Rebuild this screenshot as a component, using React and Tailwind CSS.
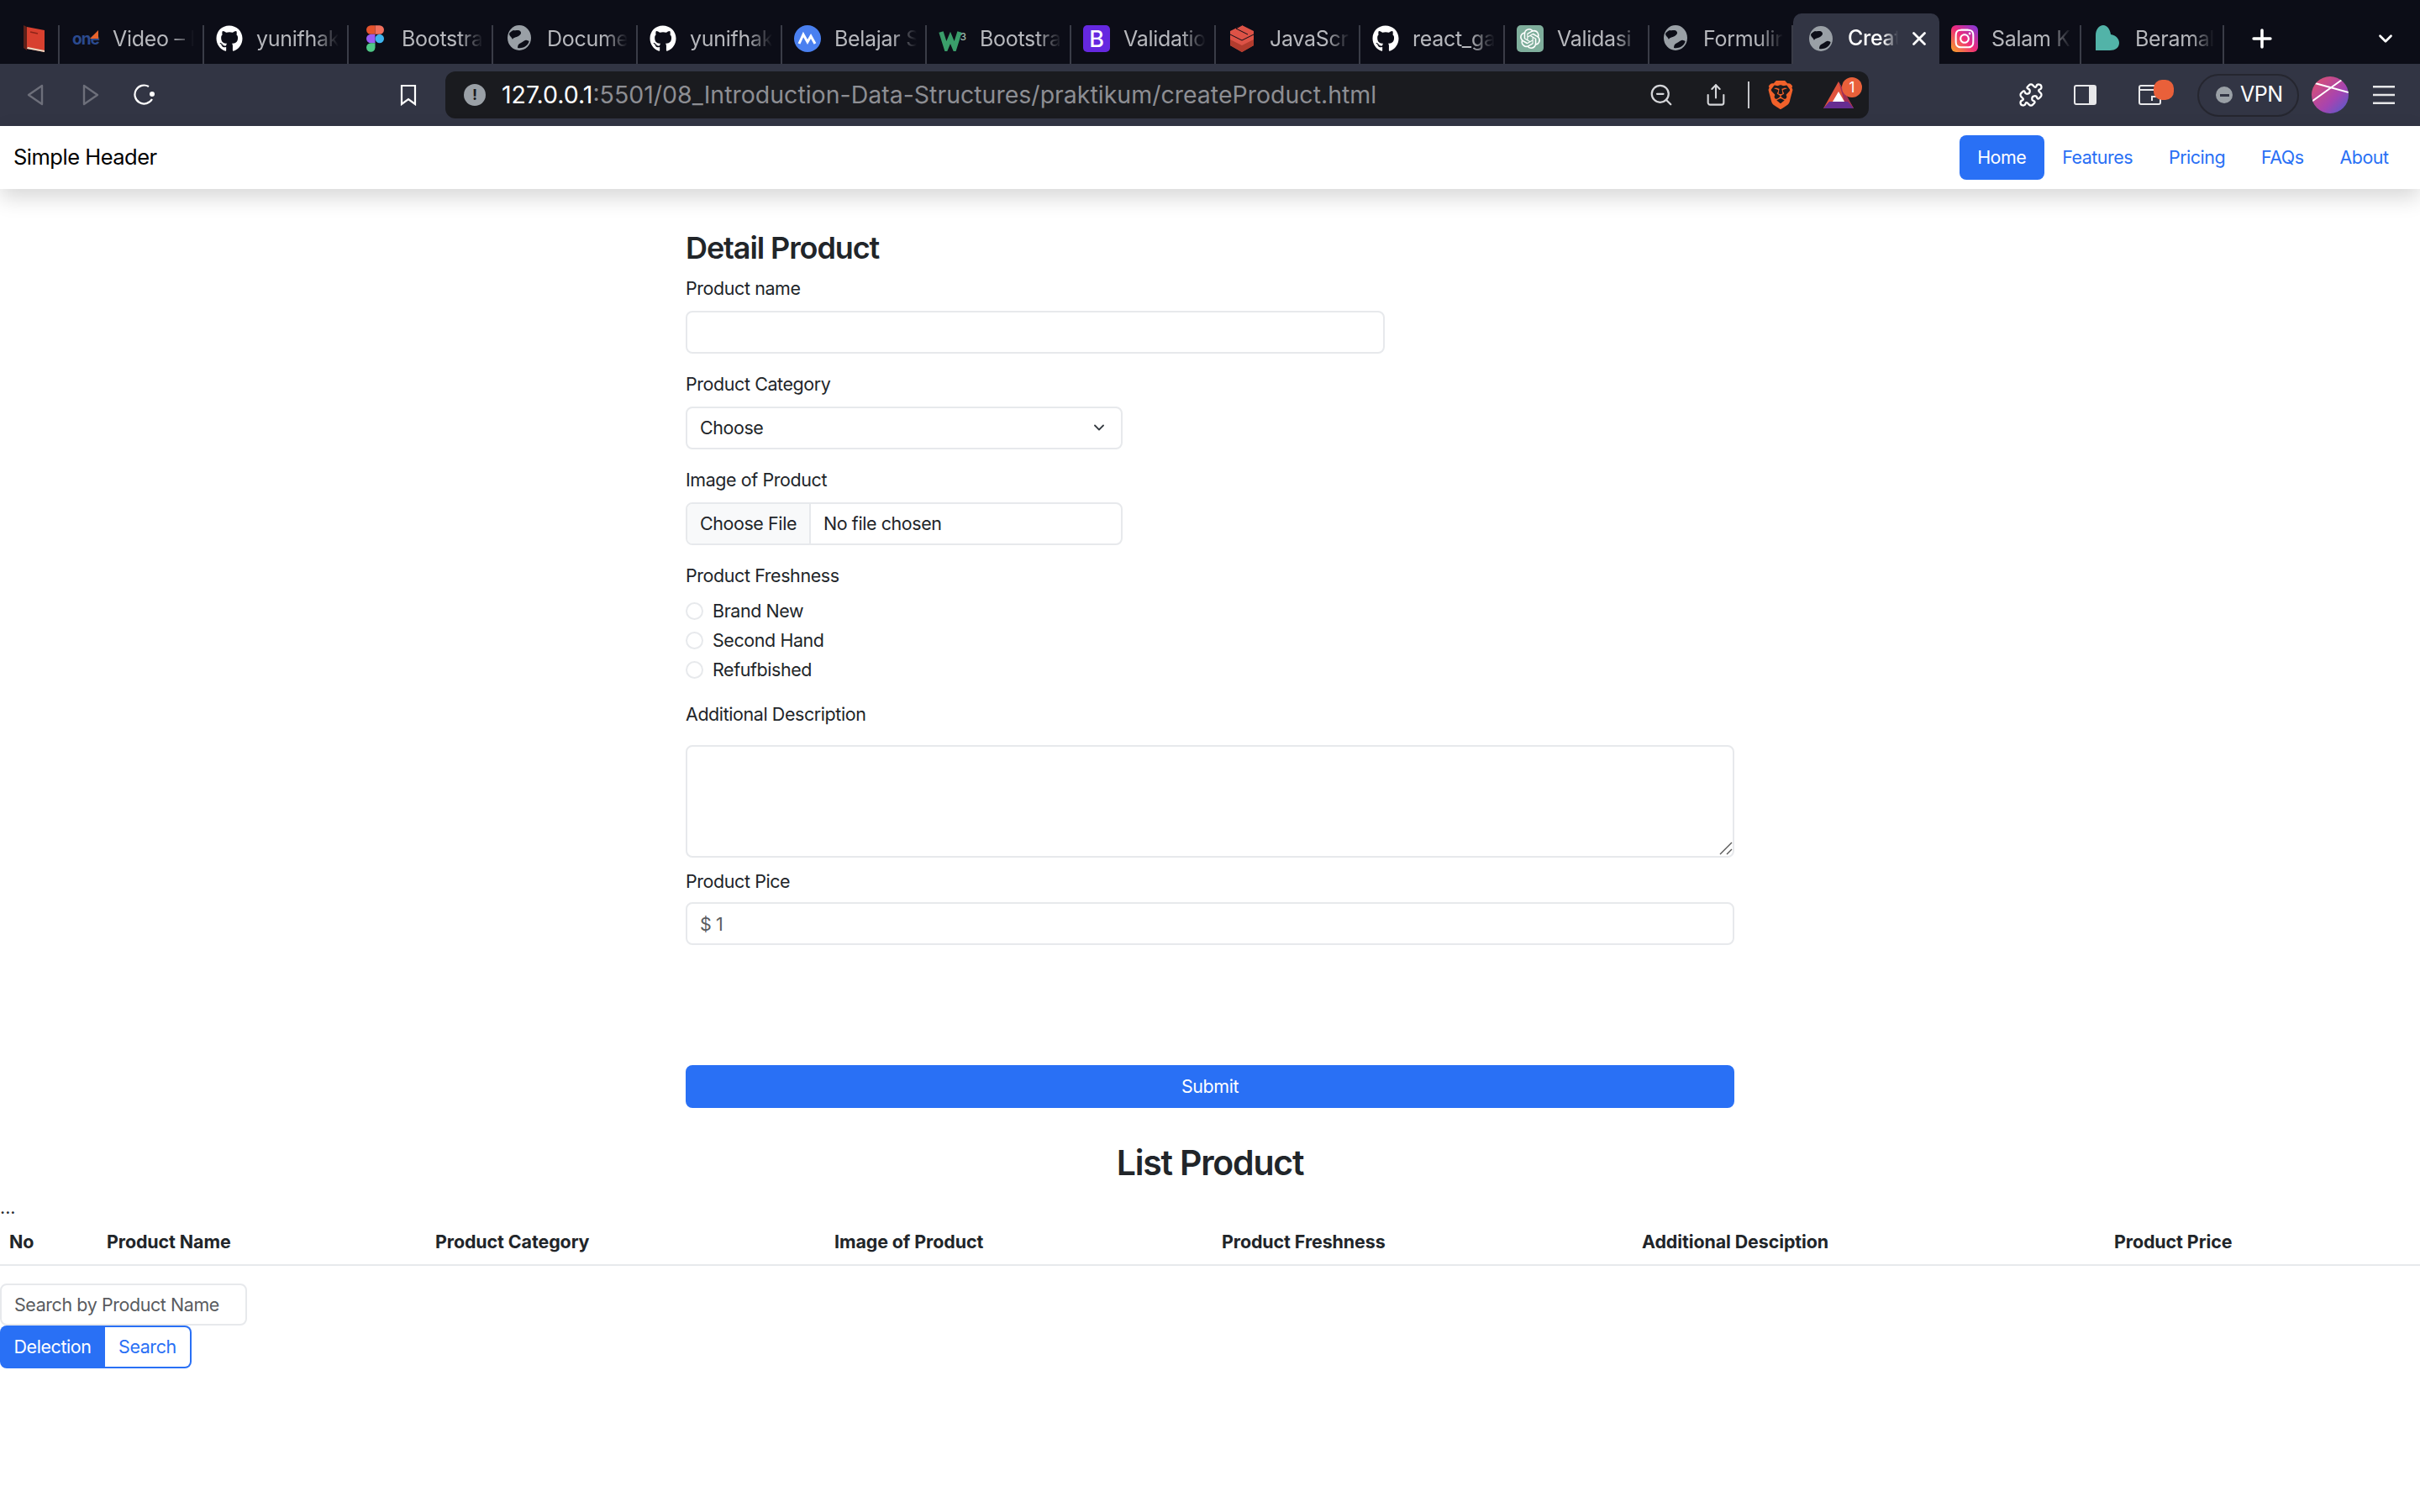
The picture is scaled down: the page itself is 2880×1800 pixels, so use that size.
import React from "react";
import { ChevronDown, Plus, X, Puzzle, ZoomOut, Share } from "lucide-react";
import { FaGithub, FaInstagram } from "react-icons/fa";
import { SiBrave, SiOpenai } from "react-icons/si";

const Globe = () => (
  <svg viewBox="0 0 28 30" className="w-[28px] h-[30px]">
    <ellipse cx="14" cy="15" rx="14" ry="15" fill="#9aa0a6" />
    <path d="M7 6c3 1 6-1 8 1s1 4-2 6-6 1-7 4c-1-3-4-4-4-7 1-2 3-3 5-4zM12 27c0-3 1-5 4-6s4-4 7-3 3 1 2 3c-2 4-7 7-13 6z" fill="#0c0d17" />
  </svg>
);

const Github = () => <FaGithub className="w-[32px] h-[32px] text-white" />;

const BookIcon = () => (
  <svg viewBox="0 0 26 32" className="w-[26px] h-[32px]">
    <path d="M1 0l4 2v28l-4-3z" fill="#5e2019" />
    <path d="M5 2l21 4v26L5 28z" fill="#d8402f" />
    <path d="M5 28l21 4v-2L6 26z" fill="#e8d9c4" />
    <path d="M9 8l9 2" stroke="#8e2418" strokeWidth="1.5" />
  </svg>
);

const OneIcon = () => (
  <div className="w-[30px] h-[32px] relative flex items-center justify-center">
    <span className="text-[19px] font-bold text-[#2b4a8f] tracking-tighter leading-none">one</span>
    <span className="absolute right-0 top-[6px] w-0 h-0 border-l-[10px] border-b-[10px] border-l-transparent border-b-[#e8642c]" />
  </div>
);

const FigmaIcon = () => (
  <svg viewBox="0 0 20 30" className="w-[21px] h-[32px]">
    <path d="M0 5a5 5 0 0 1 5-5h5v10H5a5 5 0 0 1-5-5z" fill="#e5532d" />
    <path d="M10 0h5a5 5 0 0 1 0 10h-5z" fill="#f2705d" />
    <path d="M0 15a5 5 0 0 1 5-5h5v10H5a5 5 0 0 1-5-5z" fill="#9a5cf5" />
    <circle cx="15" cy="15" r="5" fill="#3fb4ee" />
    <path d="M0 25a5 5 0 0 1 5-5h5v5a5 5 0 0 1-10 0z" fill="#4fc785" />
  </svg>
);

const BelajarIcon = () => (
  <svg viewBox="0 0 32 32" className="w-[32px] h-[32px]">
    <circle cx="16" cy="16" r="16" fill="#4a80f0" />
    <path d="M6 22l5-11 5 9 4-7 5 9" fill="none" stroke="#fff" strokeWidth="3" />
  </svg>
);

const W3Icon = () => (
  <div className="w-[33px] h-[32px] relative">
    <svg viewBox="0 0 28 24" className="w-[28px] h-[24px] mt-[7px]">
      <path d="M3 1l6 19 5-12 5 12 6-19" fill="none" stroke="#3a9e6a" strokeWidth="5.5" />
    </svg>
    <span className="absolute right-0 top-[1px] text-[12px] leading-none text-[#9fb8aa] font-medium">3</span>
  </div>
);

const BootstrapIcon = () => (
  <div className="w-[32px] h-[32px] rounded-[5px] bg-[#6528e0] flex items-center justify-center text-white text-[27px] font-medium leading-none">B</div>
);

const CubeIcon = () => (
  <svg viewBox="0 0 28 32" className="w-[28px] h-[32px]">
    <path d="M14 0l14 7v17l-14 8-14-8V7z" fill="#dd5246" />
    <path d="M0 17l14 7 14-7v7l-14 8-14-8z" fill="#b33c2e" />
    <path d="M0 11l14 7 14-7M14 0l-7 4 14 7" fill="none" stroke="#0c0d17" strokeWidth="1" />
  </svg>
);

const OpenAiIcon = () => (
  <div className="w-[32px] h-[32px] rounded-[5px] bg-[#7fae9c] flex items-center justify-center">
    <SiOpenai className="w-[24px] h-[24px] text-white" />
  </div>
);

const InstagramIcon = () => (
  <div className="w-[32px] h-[32px] rounded-[6px] bg-[linear-gradient(45deg,#f9a825,#ee2a7b_50%,#7c3ae0)] flex items-center justify-center">
    <FaInstagram className="w-[26px] h-[26px] text-white" />
  </div>
);

const BeramalIcon = () => (
  <svg viewBox="0 0 28 32" className="w-[28px] h-[32px]">
    <path d="M0 30V12C0 5 4 0 9 0s8 5 9 11c6 1 10 5 10 10 0 6-5 9-11 9z" fill="#52b3a8" />
  </svg>
);

const globeGap = "pl-[17px] gap-[19px]";

const tabs = [
  { title: "Video – Ir", icon: <OneIcon />, w: "w-[172px]", iconGap: "pl-[16px] gap-[17px]" },
  { title: "yunifhakim", icon: <Github />, w: "w-[172px]" },
  { title: "Bootstrap", icon: <FigmaIcon />, w: "w-[172px]", iconGap: "pl-[21px] gap-[21px]" },
  { title: "Documen", icon: <Globe />, w: "w-[172px]", iconGap: globeGap },
  { title: "yunifhakim", icon: <Github />, w: "w-[172px]" },
  { title: "Belajar S", icon: <BelajarIcon />, w: "w-[172px]" },
  { title: "Bootstrap", icon: <W3Icon />, w: "w-[172px]" },
  { title: "Validation", icon: <BootstrapIcon />, w: "w-[172px]" },
  { title: "JavaScrip", icon: <CubeIcon />, w: "w-[172px]", iconGap: globeGap },
  { title: "react_ga", icon: <Github />, w: "w-[172px]" },
  { title: "Validasi", icon: <OpenAiIcon />, w: "w-[172px]" },
  { title: "Formulir", icon: <Globe />, w: "w-[171px]", iconGap: globeGap },
  { title: "Creat", icon: <Globe />, w: "w-[174px]", active: true },
  { title: "Salam Ka", icon: <InstagramIcon />, w: "w-[169px]" },
  { title: "BeramalB", icon: <BeramalIcon />, w: "w-[170px]", iconGap: globeGap },
];

const Tab = ({ tab }) => {
  if (tab.active) {
    return (
      <div className={`${tab.w} h-[60px] bg-[#323544] rounded-t-[10px] flex items-center pl-[19px] relative shrink-0`}>
        <Globe />
        <span className="ml-[18px] w-[60px] overflow-hidden whitespace-nowrap text-[25px] tracking-[-0.3px] font-medium text-white [mask-image:linear-gradient(90deg,#000_70%,transparent)]">{tab.title}</span>
        <X className="absolute right-[11px] top-[17px] w-[26px] h-[26px] text-white" strokeWidth={2.5} />
      </div>
    );
  }
  return (
    <div className={`${tab.w} h-[46px] border-r-2 border-[#3a3c47] flex items-start shrink-0 overflow-hidden ${tab.iconGap || "pl-[14px] gap-[16px]"}`}>
      <div className="shrink-0">{tab.icon}</div>
      <span className="flex-1 overflow-hidden whitespace-nowrap text-[25px] tracking-[-0.3px] leading-[32px] text-[#b7b8bd] mr-[10px] [mask-image:linear-gradient(90deg,#000_70%,transparent)]">{tab.title}</span>
    </div>
  );
};

const TabBar = () => (
  <div className="h-[76px] bg-[#0c0d17] flex items-end">
    <div className="w-[71px] h-[46px] border-r-2 border-[#3a3c47] pl-[27px] shrink-0">
      <BookIcon />
    </div>
    {tabs.map((tab, i) => <Tab key={i} tab={tab} />)}
    <div className="flex-1 h-[60px] flex items-center justify-between pl-[28px] pr-[28px]">
      <Plus className="w-[34px] h-[34px] text-white" strokeWidth={2.5} />
      <ChevronDown className="w-[26px] h-[26px] text-white" strokeWidth={2.5} />
    </div>
  </div>
);

const Toolbar = () => (
  <div className="h-[74px] bg-[#323544] flex items-center text-white">
    <div className="w-[530px] flex items-center shrink-0 pl-[32px]">
      <svg viewBox="0 0 20 26" className="w-[20px] h-[26px]"><path d="M18 2L2 13l16 11z" fill="none" stroke="#6d6f7a" strokeWidth="2.4" strokeLinejoin="round" /></svg>
      <svg viewBox="0 0 20 26" className="w-[20px] h-[26px] ml-[46px]"><path d="M2 2l16 11L2 24z" fill="none" stroke="#6d6f7a" strokeWidth="2.4" strokeLinejoin="round" /></svg>
      <svg viewBox="0 0 28 26" className="w-[28px] h-[26px] ml-[40px]">
        <path d="M19 3a11 11 0 1 0 4 15" fill="none" stroke="#fff" strokeWidth="2.2" />
        <circle cx="23" cy="12" r="3" fill="#fff" />
      </svg>
      <svg viewBox="0 0 20 26" className="w-[20px] h-[26px] ml-[290px]"><path d="M2 2h16v22l-8-6-8 6z" fill="none" stroke="#fff" strokeWidth="2.2" /></svg>
    </div>
    <div className="w-[1694px] h-[56px] bg-[#1a1b1f] rounded-[12px] flex items-center pl-[22px] pr-[18px] shrink-0">
      <span className="w-[26px] h-[26px] rounded-full bg-[#9aa0a6] text-[#1a1b1f] text-[18px] font-bold leading-[26px] text-center">!</span>
      <div className="ml-[19px] text-[28.5px] flex-1 whitespace-nowrap">
        127.0.0.1<span className="text-[#8d8e93]">:5501/08_Introduction-Data-Structures/praktikum/createProduct.html</span>
      </div>
      <ZoomOut className="w-[30px] h-[30px] text-[#d5d6d9]" strokeWidth={1.8} />
      <Share className="w-[28px] h-[30px] ml-[36px] text-[#d5d6d9]" strokeWidth={1.8} />
      <div className="w-[2px] h-[32px] bg-[#c5c6ca] ml-[24px]" />
      <SiBrave className="w-[34px] h-[36px] ml-[20px] text-[#f1612a]" />
      <div className="relative ml-[34px] w-[36px] h-[32px]">
        <svg viewBox="0 0 36 32" className="w-[36px] h-[32px]">
          <path d="M18 0l18 32H0z" fill="#e0533c" />
          <path d="M18 0l18 32-11-8z" fill="#a12f56" />
          <path d="M0 32l7-8h22l7 8z" fill="#662d91" />
          <path d="M18 12l7 12H11z" fill="#fff" />
        </svg>
        <span className="absolute -top-[5px] -right-[10px] w-[24px] h-[24px] rounded-full bg-[#e9603a] text-white text-[17px] leading-[24px] text-center">1</span>
      </div>
    </div>
    <div className="flex-1 flex items-center pl-[178px]">
      <Puzzle className="w-[30px] h-[30px]" strokeWidth={1.8} />
      <svg viewBox="0 0 27 24" className="w-[27px] h-[24px] ml-[36px]">
        <rect x="1" y="1" width="25" height="22" rx="2" fill="none" stroke="#e8e8ea" strokeWidth="2" />
        <path d="M18 1h6a2 2 0 0 1 2 2v18a2 2 0 0 1-2 2h-6z" fill="#e8e8ea" />
      </svg>
      <div className="relative ml-[50px] w-[27px] h-[24px]">
        <svg viewBox="0 0 27 24" className="w-[27px] h-[24px]">
          <rect x="1" y="1" width="25" height="22" rx="2" fill="none" stroke="#e8e8ea" strokeWidth="2" />
          <path d="M1 6h25M16 19v-5h8" fill="none" stroke="#e8e8ea" strokeWidth="2" />
        </svg>
        <span className="absolute -top-[6px] -right-[15px] w-[24px] h-[24px] rounded-[10px] bg-[#e9603a]" />
      </div>
      <div className="ml-[43px] w-[121px] h-[51px] rounded-full border-2 border-[#25262f] flex items-center pl-[20px]">
        <span className="w-[20px] h-[20px] rounded-full bg-[#9aa0a6] flex items-center justify-center"><span className="w-[11px] h-[3px] bg-[#323544]" /></span>
        <span className="ml-[9px] text-[25px] tracking-[-0.5px]">VPN</span>
      </div>
      <svg viewBox="0 0 44 44" className="ml-[15px] w-[44px] h-[44px] shrink-0">
        <defs>
          <linearGradient id="avatar" x1="0" y1="0" x2="1" y2="1">
            <stop offset="0" stopColor="#e2526a" />
            <stop offset="0.6" stopColor="#a644b0" />
            <stop offset="1" stopColor="#4a5fd0" />
          </linearGradient>
          <clipPath id="avatarClip"><circle cx="22" cy="22" r="22" /></clipPath>
        </defs>
        <circle cx="22" cy="22" r="22" fill="url(#avatar)" />
        <path d="M4 8l40 11M0 30L36 4" stroke="#fff" strokeWidth="2" clipPath="url(#avatarClip)" />
      </svg>
      <svg viewBox="0 0 26 22" className="w-[26px] h-[22px] ml-[29px]">
        <path d="M0 1.2h26M0 11h26M0 20.8h26" stroke="#e6e6e8" strokeWidth="2.4" />
      </svg>
    </div>
  </div>
);

const navLinks = ["Home", "Features", "Pricing", "FAQs", "About"];

const Navbar = () => (
  <header className="h-[75px] bg-white flex items-center justify-between px-[16px] shadow-[0_10px_24px_rgba(0,0,0,0.16)] relative">
    <span className="text-[25.5px] tracking-[-0.5px] text-black">Simple Header</span>
    <nav className="flex">
      {navLinks.map((l, i) => (
        <a key={l} className={`h-[53px] px-[21.5px] rounded-[8px] text-[21.44px] tracking-[-0.5px] leading-[53px] ${i === 0 ? "bg-[#2970f5] text-white" : "text-[#2970f5]"}`}>{l}</a>
      ))}
    </nav>
  </header>
);

const inputClass = "block h-[51px] border-2 border-[#e7e9ec] rounded-[8px] bg-white px-[15px] text-[21.44px] tracking-[-0.4px] text-[#212529] outline-none";

const Label = ({ children }) => <label className="block h-[32px] leading-[32px] text-[21.44px] tracking-[-0.4px] text-[#212529]">{children}</label>;

const Field = ({ label, children }) => (
  <div className="mb-[20.5px]">
    <Label>{label}</Label>
    <div className="mt-[10.5px]">{children}</div>
  </div>
);

const Radio = ({ label }) => (
  <div className="h-[35px] flex items-center">
    <span className="w-[21px] h-[21px] rounded-full border-2 border-[#e7e9ec]" />
    <span className="ml-[11px] text-[21.44px] tracking-[-0.4px] text-[#212529]">{label}</span>
  </div>
);

const DetailForm = () => (
  <form className="w-[1248px] mx-auto pt-[48px]">
    <h3 className="text-[36px] tracking-[-1.1px] leading-[45px] font-semibold text-[#212529] mb-[9px]">Detail Product</h3>
    <Field label="Product name"><input className={`${inputClass} w-[832px]`} /></Field>
    <Field label="Product Category">
      <div className={`${inputClass} w-[520px] flex items-center justify-between pr-[16px]`}>
        <span>Choose</span>
        <ChevronDown className="w-[20px] h-[20px] text-[#343a40]" strokeWidth={2.2} />
      </div>
    </Field>
    <Field label="Image of Product">
      <div className={`${inputClass} w-[520px] flex items-center !px-0 overflow-hidden`}>
        <span className="h-full px-[15px] flex items-center bg-[#f8f9fa] border-r-2 border-[#e7e9ec]">Choose File</span>
        <span className="ml-[15px]">No file chosen</span>
      </div>
    </Field>
    <Label>Product Freshness</Label>
    <div className="mt-[9px] mb-[19px]">
      <Radio label="Brand New" />
      <Radio label="Second Hand" />
      <Radio label="Refufbished" />
    </div>
    <Label>Additional Description</Label>
    <div className="relative mt-[21px] mb-[12px]">
      <textarea className={`${inputClass} w-full !h-[134px] resize-none`} />
      <svg viewBox="0 0 16 16" className="absolute right-[2px] bottom-[3px] w-[16px] h-[16px]">
        <path d="M1 15L15 1M9 15l6-6" stroke="#555" strokeWidth="1.4" />
      </svg>
    </div>
    <Label>Product Pice</Label>
    <input className={`${inputClass} w-full mt-[9px] placeholder:text-[#595c5f]`} placeholder="$ 1" />
    <button type="button" className="block w-full h-[51px] mt-[143px] rounded-[8px] bg-[#2970f5] text-white text-[21.44px] tracking-[-0.4px]">Submit</button>
  </form>
);

const columns = [
  { name: "No", w: "w-[116px]" },
  { name: "Product Name", w: "w-[391px]" },
  { name: "Product Category", w: "w-[475px]" },
  { name: "Image of Product", w: "w-[461px]" },
  { name: "Product Freshness", w: "w-[500px]" },
  { name: "Additional Desciption", w: "w-[562px]" },
  { name: "Product Price", w: "w-[375px]" },
];

const ProductList = () => (
  <section>
    <h2 className="mt-[40px] text-center text-[41px] tracking-[-1.2px] leading-[51px] font-semibold text-[#212529]">List Product</h2>
    <div className="mt-[10.5px] h-[32px] leading-[32px] text-[21.44px] text-[#212529]">...</div>
    <table className="w-full table-fixed border-collapse">
      <thead>
        <tr className="border-b-2 border-[#e7e9ec]">
          {columns.map((c) => (
            <th key={c.name} className={`${c.w} h-[53px] px-[11px] text-left text-[21.44px] tracking-[-0.1px] font-bold text-[#212529]`}>{c.name}</th>
          ))}
        </tr>
      </thead>
    </table>
    <input className={`${inputClass} w-[294px] !h-[50px] mt-[21px] placeholder:text-[#595c5f]`} placeholder="Search by Product Name" />
    <div className="flex">
      <button type="button" className="h-[51px] px-[16.5px] rounded-l-[8px] bg-[#2970f5] text-white text-[21.44px] tracking-[-0.4px]">Delection</button>
      <button type="button" className="h-[51px] px-[16px] rounded-r-[8px] border-2 border-l-0 border-[#2970f5] text-[#2970f5] text-[21.44px] tracking-[-0.4px]">Search</button>
    </div>
  </section>
);

export default function App() {
  return (
    <div className="min-h-[1800px] bg-white font-['Inter',sans-serif]">
      <TabBar />
      <Toolbar />
      <Navbar />
      <DetailForm />
      <ProductList />
    </div>
  );
}
